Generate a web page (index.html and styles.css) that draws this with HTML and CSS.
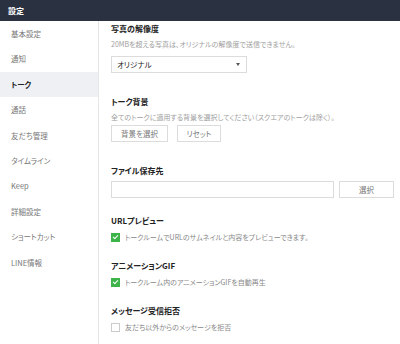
FILE: index.html
```html
<!DOCTYPE html>
<html lang="ja">
<head>
    <meta charset="UTF-8">
    <title>設定</title>
    <link rel="stylesheet" href="styles.css">
</head>
<body>
    <div class="header">設定</div>
    <div class="layout">
        <ul class="sidebar">
            <li>基本設定</li>
            <li>通知</li>
            <li class="active">トーク</li>
            <li>通話</li>
            <li>友だち管理</li>
            <li>タイムライン</li>
            <li>Keep</li>
            <li>詳細設定</li>
            <li>ショートカット</li>
            <li>LINE情報</li>
        </ul>

        <div class="main">
            <div class="section first">
                <div class="title">写真の解像度</div>
                <div class="desc">20MBを超える写真は、オリジナルの解像度で送信できません。</div>
                <div class="select">
                    <span>オリジナル</span>
                    <span class="arrow"></span>
                </div>
            </div>

            <div class="section">
                <div class="title">トーク背景</div>
                <div class="desc">全てのトークに適用する背景を選択してください（スクエアのトークは除く）。</div>
                <div class="buttons">
                    <div class="btn wide">背景を選択</div>
                    <div class="btn">リセット</div>
                </div>
            </div>

            <div class="section">
                <div class="title">ファイル保存先</div>
                <div class="path-row">
                    <div class="input"></div>
                    <div class="btn pick">選択</div>
                </div>
            </div>

            <div class="section tight">
                <div class="title">URLプレビュー</div>
                <div class="check-row">
                    <span class="check on"></span>
                    <span>トークルームでURLのサムネイルと内容をプレビューできます。</span>
                </div>
            </div>

            <div class="section tight">
                <div class="title">アニメーションGIF</div>
                <div class="check-row">
                    <span class="check on"></span>
                    <span>トークルーム内のアニメーションGIFを自動再生</span>
                </div>
            </div>

            <div class="section tight">
                <div class="title">メッセージ受信拒否</div>
                <div class="check-row">
                    <span class="check"></span>
                    <span>友だち以外からのメッセージを拒否</span>
                </div>
            </div>
        </div>
    </div>
</body>
</html>
```

FILE: styles.css
```css
body {
    margin: 0;
    font-family: "Noto Sans CJK JP", "Liberation Sans", sans-serif;
    font-feature-settings: "palt";
    font-size: 7.5px;
    color: #333;
    background-color: #fff;
    width: 400px;
    height: 344px;
    overflow: hidden;
}
.header {
    height: 21px;
    line-height: 21px;
    background-color: #2a3242;
    color: #fff;
    font-weight: bold;
    font-size: 8px;
    padding-left: 8px;
}
.layout {
    display: flex;
    height: 323px;
}
.sidebar {
    list-style: none;
    margin: 0;
    padding: 0;
    width: 98px;
    border-right: 1px solid #e6e6e6;
    flex-shrink: 0;
}
.sidebar li {
    height: 25.4px;
    line-height: 25.4px;
    padding-left: 11px;
    color: #777;
}
.sidebar li.active {
    background-color: #eef0f4;
    color: #222;
    font-weight: bold;
}
.main {
    flex: 1;
    padding: 2px 6px 0 12px;
}
.section {
    margin-top: 23px;
}
.section.first {
    margin-top: 0;
}
.section.tight {
    margin-top: 17px;
}
.title {
    font-weight: bold;
    font-size: 8px;
    line-height: 12px;
    color: #222;
}
.desc {
    margin-top: 3px;
    line-height: 12px;
    color: #a0a0a0;
    font-size: 7px;
    white-space: nowrap;
}
.select {
    margin-top: 6px;
    width: 136px;
    height: 17px;
    box-sizing: border-box;
    border: 1px solid #dcdcdc;
    display: flex;
    align-items: center;
    justify-content: space-between;
    padding: 0 6px 0 5px;
    color: #222;
}
.arrow {
    width: 0;
    height: 0;
    border-left: 2.5px solid transparent;
    border-right: 2.5px solid transparent;
    border-top: 3px solid #555;
}
.buttons {
    margin-top: 2px;
    display: flex;
    gap: 9px;
}
.btn {
    height: 17px;
    line-height: 15px;
    box-sizing: border-box;
    border: 1px solid #dcdcdc;
    text-align: center;
    color: #777;
    width: 44px;
}
.btn.wide {
    width: 57px;
}
.path-row {
    margin-top: 4px;
    display: flex;
    gap: 5px;
}
.input {
    width: 223px;
    height: 17px;
    box-sizing: border-box;
    border: 1px solid #dcdcdc;
}
.btn.pick {
    width: 55px;
}
.check-row {
    margin-top: 4px;
    display: flex;
    align-items: center;
    gap: 5px;
    line-height: 12px;
    font-size: 7px;
    color: #888;
}
.check {
    width: 9px;
    height: 9px;
    box-sizing: border-box;
    border: 1px solid #ccc;
    position: relative;
}
.check.on {
    background-color: #3db44a;
    border-color: #3db44a;
}
.check.on::after {
    content: "";
    position: absolute;
    left: 2px;
    top: 0px;
    width: 2px;
    height: 4px;
    border-right: 1.2px solid #fff;
    border-bottom: 1.2px solid #fff;
    transform: rotate(45deg);
}
```
